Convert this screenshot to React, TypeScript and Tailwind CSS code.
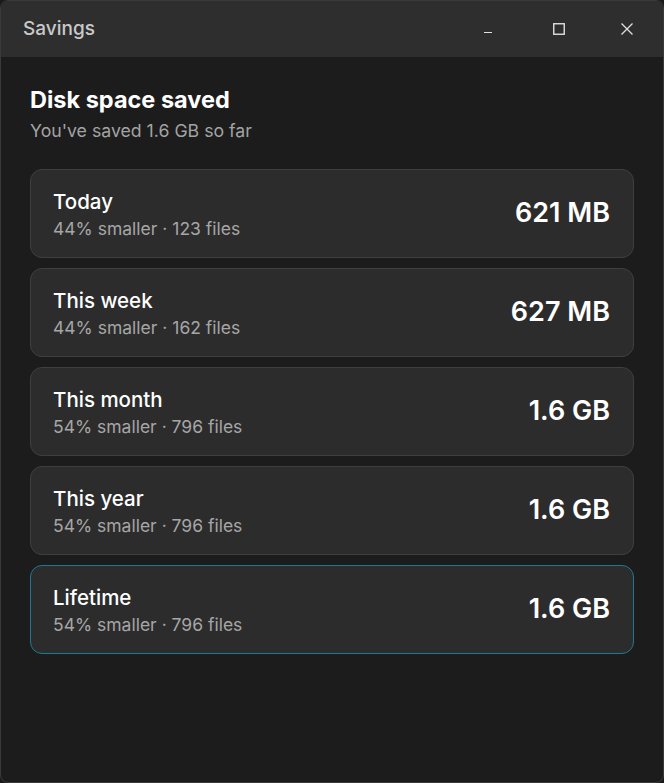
const rows = [
  { label: "Today", detail: "44% smaller · 123 files", value: "621 MB" },
  { label: "This week", detail: "44% smaller · 162 files", value: "627 MB" },
  { label: "This month", detail: "54% smaller · 796 files", value: "1.6 GB" },
  { label: "This year", detail: "54% smaller · 796 files", value: "1.6 GB" },
  { label: "Lifetime", detail: "54% smaller · 796 files", value: "1.6 GB", active: true },
];

export default function App() {
  return (
    <div className="h-[783px] w-[664px] bg-[#1a1a1a] font-['Inter',sans-serif]">
      <div className="flex h-full w-full flex-col overflow-hidden rounded-[8px] border border-[#3a3a3a] bg-[#1c1c1c]">
        {/* title bar */}
        <div className="flex h-[56px] shrink-0 items-center justify-between bg-[#2e2e2e] pl-[22px] pr-[30px]">
          <span className="text-[19px] font-medium text-[#c9c9c9]">Savings</span>
          <div className="flex items-center text-[#e0e0e0]">
            <svg width="8" height="12" viewBox="0 0 8 12" className="mt-[2px]">
              <path d="M0 8.5h8" stroke="currentColor" strokeWidth="1.2" />
            </svg>
            <svg width="12" height="12" viewBox="0 0 12 12" className="ml-[61px]">
              <rect x="0.75" y="0.75" width="10.5" height="10.5" fill="none" stroke="currentColor" strokeWidth="1.4" />
            </svg>
            <svg width="12" height="12" viewBox="0 0 12 12" className="ml-[56px]">
              <path d="M0.5 0.5l11 11M11.5 0.5l-11 11" stroke="currentColor" strokeWidth="1.3" />
            </svg>
          </div>
        </div>

        {/* content */}
        <div className="flex flex-col px-[29px] pt-[28px]">
          <h1 className="text-[23.5px] font-bold leading-[30px] text-white">Disk space saved</h1>
          <p className="mt-[5px] text-[17.7px] leading-[22px] text-[#a3a3a3]">You've saved 1.6 GB so far</p>

          <div className="mt-[27px] flex flex-col gap-[10px]">
            {rows.map((r) => (
              <div
                key={r.label}
                className={
                  "flex h-[89px] items-center justify-between rounded-[12px] bg-[#2c2c2c] pl-[22px] pr-[23px] " +
                  (r.active ? "border-[1.5px] border-[#1f7891]" : "border border-[#3f3f3f]")
                }
              >
                <div className="flex flex-col pt-[2px]">
                  <span className="text-[20.5px] font-medium leading-[26px] text-white">{r.label}</span>
                  <span className="mt-[3px] text-[17.5px] leading-[22px] text-[#a6a6a6]">{r.detail}</span>
                </div>
                <span className="text-[27px] font-semibold text-white">{r.value}</span>
              </div>
            ))}
          </div>
        </div>
      </div>
    </div>
  );
}
